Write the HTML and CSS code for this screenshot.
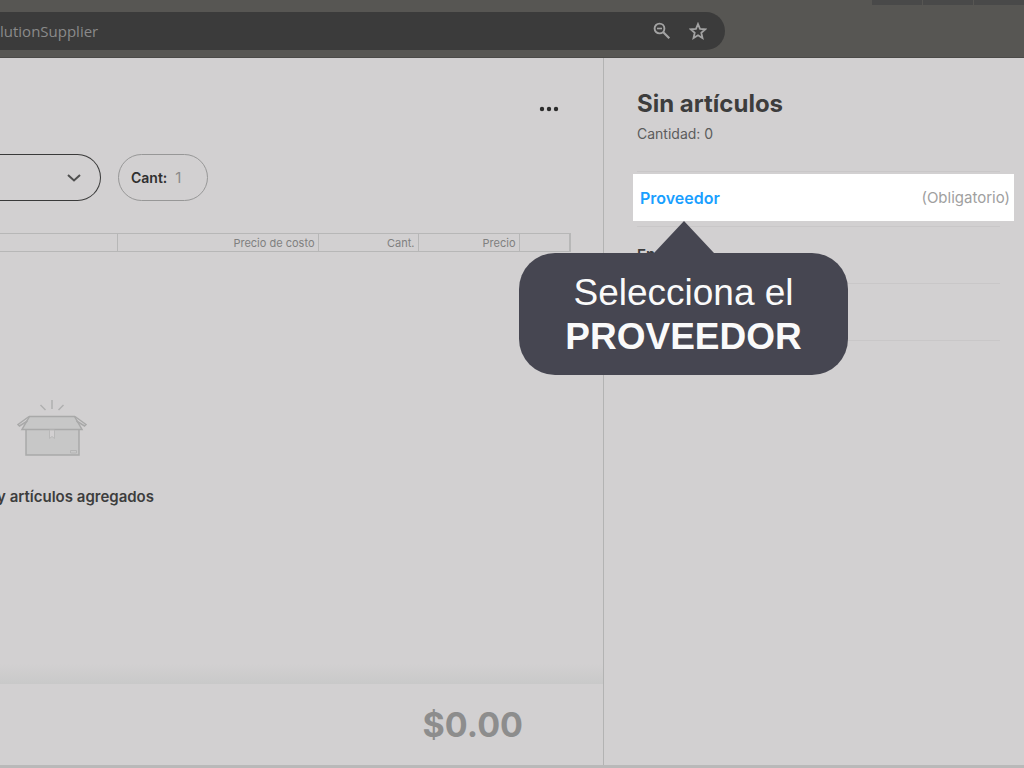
FILE: index.html
```html
<!DOCTYPE html>
<html lang="es">
<head>
    <meta charset="UTF-8">
    <meta name="viewport" content="width=device-width, initial-scale=1.0">
    <title>Proveedor</title>
    <link rel="stylesheet" href="styles.css">
</head>
<body>
    <header class="browser">
        <div class="window-controls">
            <span></span>
            <span></span>
            <span></span>
        </div>
        <div class="address-bar">
            <input type="text" class="url" value="lutionSupplier" aria-label="URL" readonly>
            <button type="button" class="icon-btn" aria-label="Zoom">
                <svg width="18" height="18" viewBox="0 0 18 18" fill="none" stroke="currentColor">
                    <circle cx="6.5" cy="6.5" r="4.9" stroke-width="1.9"/>
                    <path d="M4 6.500h5" stroke-width="1.6"/>
                    <path d="M10 10l6.300 6.300" stroke-width="2.200"/>
                </svg>
            </button>
            <button type="button" class="icon-btn" aria-label="Favorito">
                <svg width="18" height="18" viewBox="0 0 18 18" fill="none" stroke="currentColor" stroke-width="1.8">
                    <path d="M9 2l2 4.900 5.300.4-4 3.500 1.200 5.200L9 13.200 4.500 16l1.200-5.200-4-3.500 5.300-.4z"/>
                </svg>
            </button>
        </div>
    </header>

    <div class="app">
        <main class="order">
            <div class="toolbar">
                <button type="button" class="more-btn" aria-label="Más opciones">
                    <svg width="20" height="6" viewBox="0 0 20 6" fill="currentColor">
                        <circle cx="3" cy="3" r="2.200"/>
                        <circle cx="10" cy="3" r="2.200"/>
                        <circle cx="17" cy="3" r="2.200"/>
                    </svg>
                </button>
            </div>

            <form class="filters">
                <div class="select-wrap">
                    <select aria-label="Artículo"><option></option></select>
                    <svg width="14" height="8" viewBox="0 0 14 8" fill="none" stroke="currentColor" stroke-width="2">
                        <path d="M1 1l6 5.500 6-5.500"/>
                    </svg>
                </div>
                <div class="quantity">
                    <label for="quantity">Cant:</label>
                    <input type="text" id="quantity" value="1">
                </div>
            </form>

            <table class="items">
                <thead>
                    <tr>
                        <th class="col-name"></th>
                        <th class="col-cost">Precio de costo</th>
                        <th class="col-qty">Cant.</th>
                        <th class="col-price">Precio</th>
                        <th class="col-actions"></th>
                    </tr>
                </thead>
            </table>

            <div class="empty">
                <svg class="box" width="72" height="58" viewBox="0 0 72 58" fill="none" stroke="#a9a9a9" stroke-width="1.500">
                    <path d="M36 1v9M24.500 6l5 5M47.500 6l-5 5" stroke="#b0b0b0"/>
                    <path d="M10 30h53v26H10z" fill="#c7c7c7"/>
                    <path d="M13.500 17.500h45L66 30.500H6z" fill="#c7c7c7"/>
                    <path d="M13 17.500L2 25.500l1.500 1.500 8-5M59 17.500l11 8-1.500 1.500-8-5"/>
                    <path d="M33.500 31h5v8.500L36 37.500l-2.500 2z" fill="#d2d0d1" stroke="#b8b8b8" stroke-width="1"/>
                    <path d="M54.500 51.500h6v2.500h-6z" stroke="#b4b4b4" stroke-width="1"/>
                </svg>
                <p>y artículos agregados</p>
            </div>

            <footer class="total">$0.00</footer>
        </main>

        <aside class="summary">
            <h1>Sin artículos</h1>
            <p>Cantidad: 0</p>

            <ul class="fields">
                <li>
                    <button type="button" class="supplier">
                        <strong>Proveedor</strong>
                        <span>(Obligatorio)</span>
                    </button>
                    <div class="tooltip">Selecciona el <strong>PROVEEDOR</strong></div>
                </li>
                <li class="field">En</li>
                <li class="field"></li>
            </ul>
        </aside>
    </div>
</body>
</html>
```
FILE: styles.css
```css
* {
    margin: 0;
    padding: 0;
    box-sizing: border-box;
}

body {
    font-family: Inter, 'Liberation Sans', sans-serif;
    background: #d2d0d1;
    color: #3d3d3d;
    min-height: 100vh;
    display: flex;
    flex-direction: column;
    overflow: hidden;
}

button {
    background: none;
    border: none;
    font: inherit;
    color: inherit;
    cursor: pointer;
}

svg {
    display: block;
}

/* Browser chrome */
.browser {
    background: #575653;
    height: 58px;
    border-bottom: 1px solid #4b4a48;
}

.window-controls {
    display: flex;
    justify-content: flex-end;
    gap: 1px;
    height: 12px;
}

.window-controls span {
    width: 50px;
    height: 5px;
    background: #494949;
}

.address-bar {
    display: flex;
    align-items: center;
    gap: 18px;
    height: 38px;
    margin-right: 299px;
    padding-right: 18px;
    background: #3b3b3b;
    border-radius: 0 19px 19px 0;
    color: #a3a3a3;
}

.url {
    flex: 1;
    min-width: 0;
    background: none;
    border: none;
    outline: none;
    font-family: 'Open Sans', sans-serif;
    font-size: 15px;
    color: #8a8a8a;
}

/* Layout */
.app {
    flex: 1;
    display: grid;
    grid-template-columns: minmax(0, 1fr) 421px;
    border-bottom: 3px solid #b9b9b9;
}

.order {
    display: flex;
    flex-direction: column;
}

.toolbar {
    display: flex;
    justify-content: flex-end;
    padding: 48px 44px 0 0;
}

.more-btn {
    color: #2c2c2c;
}

/* Filters */
.filters {
    display: flex;
    gap: 17px;
    margin-top: 42px;
}

.select-wrap {
    display: flex;
    align-items: center;
    width: 101px;
    height: 47px;
    padding-right: 19px;
    border: 1px solid #3a3a3a;
    border-left: none;
    border-radius: 0 24px 24px 0;
    color: #4f4f4f;
}

.select-wrap select {
    flex: 1;
    min-width: 0;
    height: 100%;
    appearance: none;
    background: none;
    border: none;
}

.quantity {
    display: flex;
    align-items: center;
    gap: 8px;
    width: 90px;
    padding: 0 12px;
    border: 1px solid #979797;
    border-radius: 24px;
    font-size: 14px;
}

.quantity label {
    font-weight: 600;
    color: #2f2f2f;
}

.quantity input {
    width: 20px;
    background: none;
    border: none;
    font: inherit;
    font-size: 15px;
    color: #8a8a8a;
}

/* Items table */
.items {
    width: calc(100% - 32px);
    margin-top: 32px;
    table-layout: fixed;
    border-collapse: collapse;
    border: 1px solid #b7b7b7;
    border-left: none;
    border-right-width: 2px;
}

.items th {
    height: 18px;
    padding-right: 3px;
    border-right: 1px solid #b7b7b7;
    font-size: 11px;
    line-height: 16px;
    font-weight: 400;
    text-align: right;
    color: #808080;
}

.items .col-cost {
    width: 201px;
}

.items .col-qty {
    width: 100px;
}

.items .col-price {
    width: 101px;
}

.items .col-actions {
    width: 51px;
    border-right-width: 2px;
}

/* Empty state */
.empty {
    width: 154px;
    margin-top: 147px;
}

.empty .box {
    margin-left: 16px;
}

.empty p {
    display: flex;
    justify-content: flex-end;
    margin-top: 30px;
    font-size: 15px;
    line-height: 20px;
    font-weight: 600;
    white-space: nowrap;
}

.total {
    position: relative;
    height: 81px;
    margin-top: auto;
    padding-right: 80px;
    font-size: 34px;
    line-height: 81px;
    font-weight: 700;
    text-align: right;
    color: #8d8d8d;
}

/* Shadow cast over the list */
.total::before {
    content: "";
    position: absolute;
    bottom: 100%;
    left: 0;
    right: 0;
    height: 20px;
    background: linear-gradient(transparent, #c9c9c9);
}

/* Summary panel */
.summary {
    padding: 30px 24px 0 33px;
    background: #d2d0d1;
    border-left: 1px solid #b3b3b3;
    z-index: 1;
}

.summary h1 {
    font-size: 24px;
    line-height: 32px;
    font-weight: 700;
}

.summary p {
    margin-top: 4px;
    font-size: 14px;
    line-height: 20px;
    color: #5c5c5c;
}

.fields {
    margin-top: 27px;
    list-style: none;
    border-top: 1px solid #c9c7c8;
}

.fields li {
    position: relative;
    border-bottom: 1px solid #c9c7c8;
}

.supplier {
    display: flex;
    align-items: center;
    justify-content: space-between;
    width: calc(100% + 18px);
    height: 47px;
    margin: 2px -14px 5px -4px;
    padding: 0 4px 0 7px;
    background: #fff;
    font-size: 15px;
    color: #a0a0a0;
}

.supplier strong {
    font-size: 16px;
    font-weight: 600;
    color: #1a9fff;
}

.field {
    height: 57px;
    font-size: 15px;
    line-height: 56px;
    font-weight: 600;
}

.tooltip {
    position: absolute;
    top: 79px;
    left: -118px;
    z-index: 2;
    width: 329px;
    padding: 18px 40px 16px;
    background: #464651;
    border-radius: 36px;
    font-family: 'Liberation Sans', Arial, sans-serif;
    font-size: 37px;
    line-height: 44px;
    text-align: center;
    color: #fafafa;
}

.tooltip::before {
    content: "";
    position: absolute;
    bottom: 100%;
    left: 50%;
    margin-left: -30px;
    border: 30px solid transparent;
    border-top: none;
    border-bottom: 32px solid #464651;
}
```
